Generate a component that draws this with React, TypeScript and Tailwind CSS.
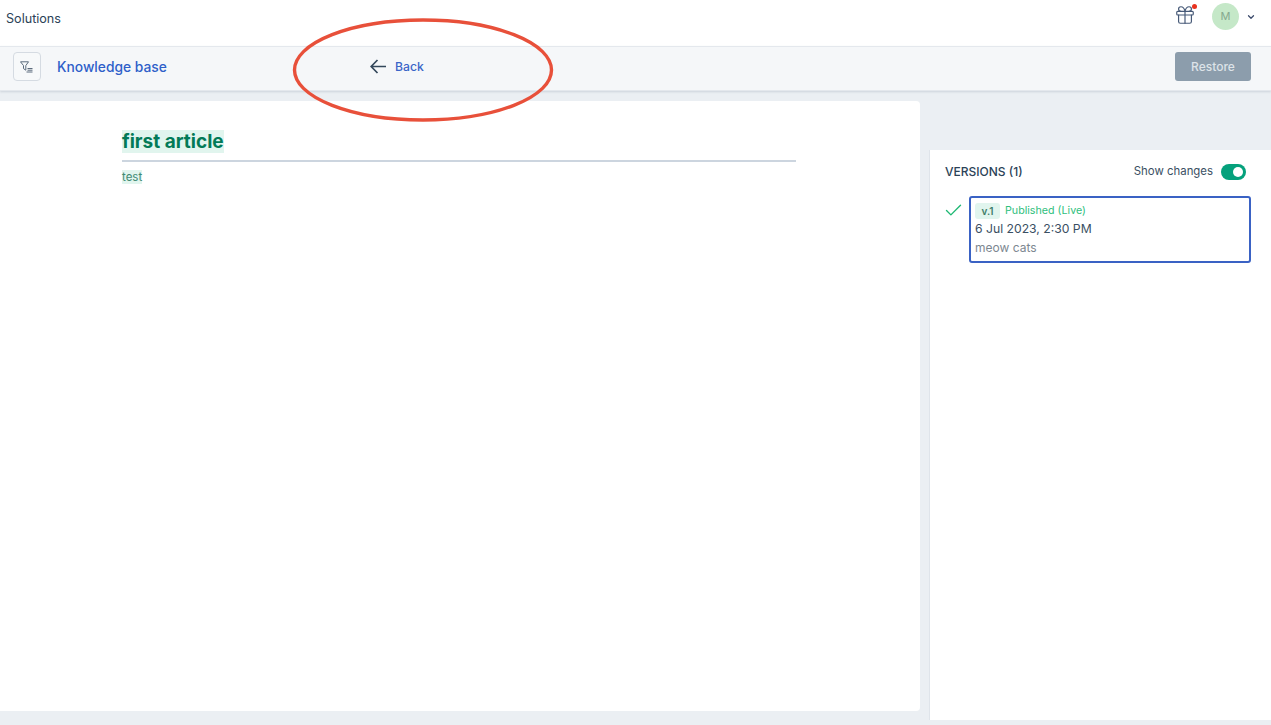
import React from 'react';
import { Check, ChevronDown, Gift } from 'lucide-react';

function FilterListIcon() {
  return (
    <svg width="14" height="12" viewBox="0 0 14 12" fill="none" stroke="#5b6b7c" strokeWidth="1">
      <path d="M.5.8h8L5.800 4.600v4.600L3.500 7.600V4.600z" strokeLinejoin="round" />
      <path d="M7.500 7.500h5M7.500 9.200h5M6.500 11h6" />
    </svg>
  );
}

function BackArrow() {
  return (
    <svg width="16" height="15" viewBox="0 0 16 15" fill="none" stroke="#33475b" strokeWidth="1.7">
      <path d="M16 7.500H1.500M7.500 1L1.200 7.500 7.500 14" />
    </svg>
  );
}

function Annotation() {
  return (
    <svg
      className="absolute left-[290px] top-[16px] pointer-events-none"
      width="266"
      height="108"
      viewBox="0 0 266 108"
      fill="none"
    >
      <ellipse cx="133" cy="54" rx="128.500" ry="50" stroke="#e8503a" strokeWidth="3.400" />
    </svg>
  );
}

export default function App() {
  return (
    <div className="relative h-[725px] w-[1271px] overflow-hidden bg-[#ebeff3] font-['Inter',sans-serif] text-[#264966]">
      {/* Top bar */}
      <header className="flex h-[46px] items-center justify-between bg-white pb-[13px] pl-[6px] pr-[15px]">
        <span className="mt-[5px] text-[12.600px] text-[#2b4257]">Solutions</span>
        <div className="flex items-center">
          <div className="relative mr-[16px] -mt-[3px]">
            <Gift className="h-[22px] w-[22px] text-[#475a78]" strokeWidth={1.300} />
            <span className="absolute -right-[1px] top-0 h-[5px] w-[5px] rounded-full bg-[#e8321e]" />
          </div>
          <div className="flex h-[27px] w-[27px] items-center justify-center rounded-full bg-[#c5e8c8] text-[11px] text-[#86a98f]">
            M
          </div>
          <ChevronDown className="ml-[7px] h-[10px] w-[10px] text-[#3b4a6b]" strokeWidth={3} />
        </div>
      </header>

      {/* Sub header */}
      <div className="flex h-[45px] items-center justify-between border-y border-[#e4e8ed] bg-[#f5f7f9] pb-[4px] pl-[13px] pr-[20px] shadow-[0_1px_2px_rgba(150,160,175,0.35)]">
        <div className="flex items-center">
          <button className="flex h-[29px] w-[28px] items-center justify-center rounded-[4px] border border-[#d5dbe2] bg-[#f7f9fa]">
            <FilterListIcon />
          </button>
          <span className="ml-[16px] mt-[2px] w-[313px] text-[13.800px] font-medium text-[#2e5fc9]">Knowledge base</span>
          <BackArrow />
          <span className="ml-[9px] mt-[2px] text-[12.200px] font-medium text-[#3a65c8]">Back</span>
        </div>
        <button className="flex h-[29px] w-[76px] items-center justify-center rounded-[3px] bg-[#8c9dac] text-[12px] font-medium text-[#dde3e8]">
          Restore
        </button>
      </div>

      {/* Body */}
      <div className="flex">
        <main className="mt-[10px] h-[610px] w-[920px] shrink-0 rounded-tr-[4px] rounded-br-[4px] bg-white pl-[122px] pt-[29px]">
          <div className="w-[674px]">
            <div className="border-b-2 border-[#ccd5df] pb-[6px]">
              <span className="bg-[#e1f5ee] text-[19px] leading-[24px] font-bold text-[#037a57]">first article</span>
            </div>
            <div className="mt-[5px] leading-[16px]">
              <span className="bg-[#e1f5ee] text-[11.500px] text-[#3f8a74]">test</span>
            </div>
          </div>
        </main>

        <aside className="ml-[9px] mt-[59px] h-[570px] w-[342px] shrink-0 border-l border-[#dfe4ea] bg-white pl-[15px]">
          <div className="flex h-[44px] w-[301px] items-center justify-between">
            <span className="text-[12px] font-medium text-[#2b4257]">VERSIONS (1)</span>
            <div className="flex items-center">
              <span className="text-[11.400px] text-[#3a4f63]">Show changes</span>
              <div className="ml-[8px] flex h-[16px] w-[25px] items-center justify-end rounded-full bg-[#05a17c] pr-[3px]">
                <span className="h-[10px] w-[10px] rounded-full bg-white" />
              </div>
            </div>
          </div>
          <div className="mt-[2px] flex items-start">
            <Check className="-ml-[2px] mt-[4px] h-[21px] w-[21px] shrink-0 text-[#1eb873]" strokeWidth={1.600} />
            <div className="ml-[5px] h-[67px] w-[282px] shrink-0 rounded-[3px] border-2 border-[#3a62c4] pl-[4px] pt-[5px]">
              <div className="flex items-center">
                <span className="flex h-[16px] w-[25px] items-center justify-center rounded-[3px] bg-[#e1f5ee] text-[10px] font-semibold text-[#3f7c69]">
                  v.1
                </span>
                <span className="ml-[5px] text-[10.700px] text-[#2fc07d]">Published (Live)</span>
              </div>
              <div className="mt-[1px] text-[12.200px] leading-[18px] text-[#3a4f63]">6 Jul 2023, 2:30 PM</div>
              <div className="mt-[1px] text-[12px] leading-[18px] text-[#7d8791]">meow cats</div>
            </div>
          </div>
        </aside>
      </div>

      <Annotation />
    </div>
  );
}
